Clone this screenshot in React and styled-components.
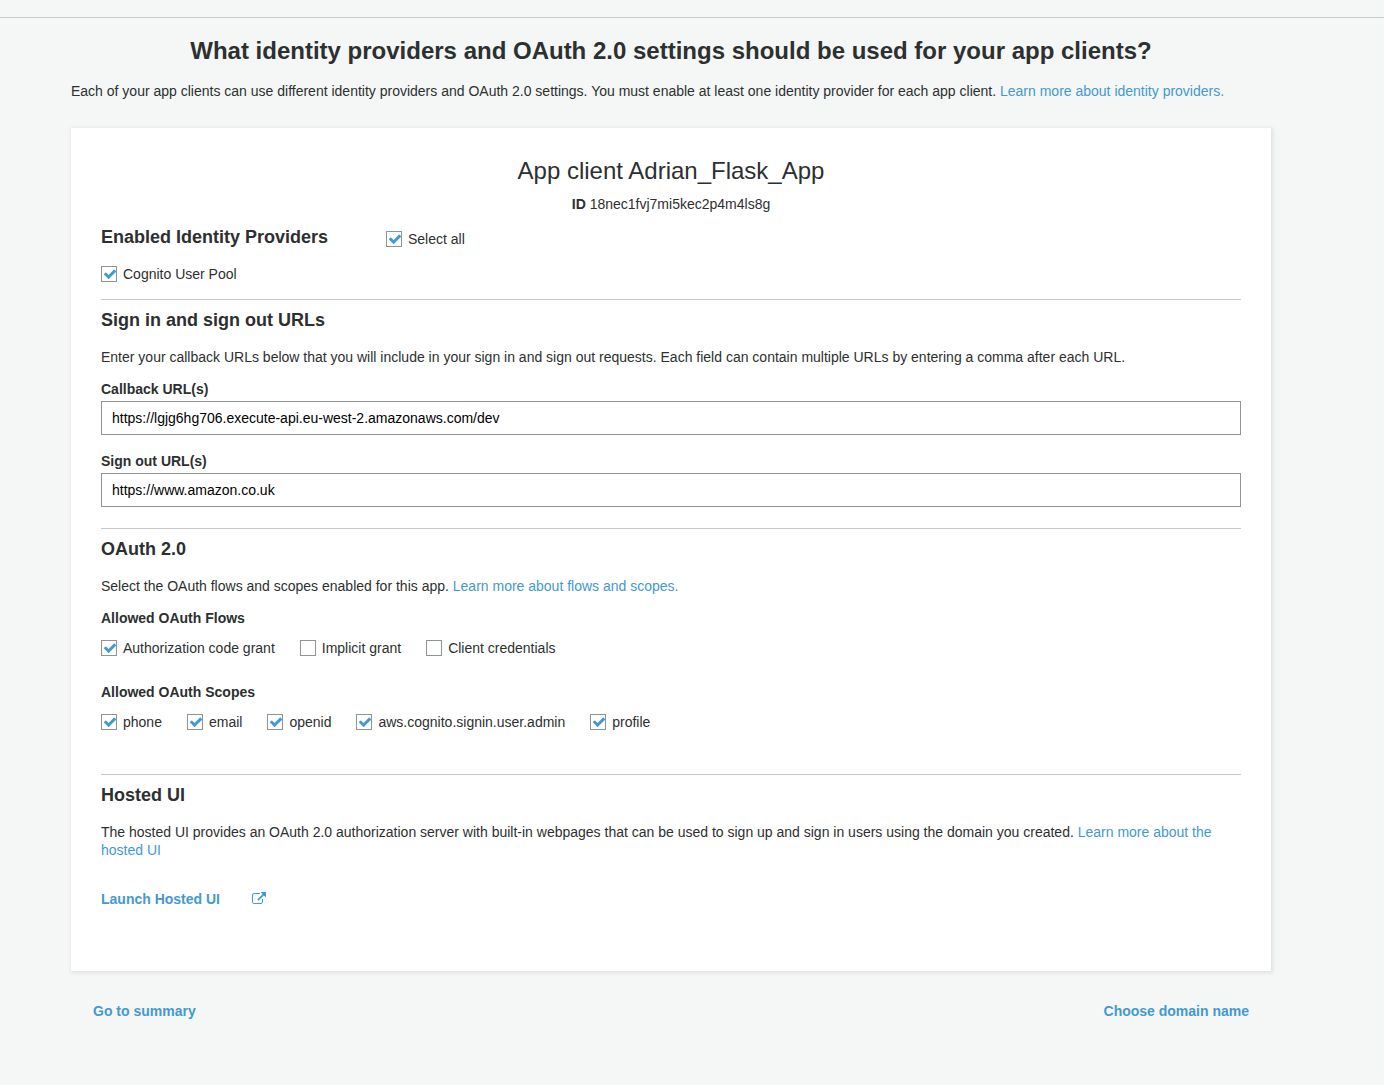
import React, { useState } from "react";
import styled, { createGlobalStyle } from "styled-components";

const GlobalStyle = createGlobalStyle`
  *, *::before, *::after { box-sizing: border-box; }
  body {
    margin: 0;
    background: #f4f7f6;
    color: #2d3030;
    font: 14px/18px "Liberation Sans", Arial, sans-serif;
  }
`;

const Page = styled.div`
  padding-top: 17px;
`;

const Main = styled.main`
  border-top: 1px solid #c6caca;
  padding: 18px 113px 56px 71px;
`;

const Content = styled.div`
  max-width: 1200px;
`;

const PageTitle = styled.h1`
  margin: 0 0 16px;
  font-size: 24px;
  line-height: 30px;
  text-align: center;
`;

const Text = styled.p`
  margin: 0 0 ${(p) => p.$gap ?? 14}px;
`;

const Link = styled.a`
  color: #4399d2;
  text-decoration: none;
  &:hover { text-decoration: underline; }
`;

const Card = styled.article`
  padding: 28px 30px 63px;
  background: #fff;
  box-shadow: 1px 1px 4px 1px rgba(0, 0, 0, 0.09);
`;

const ClientHeader = styled.header`
  margin-bottom: 12px;
  text-align: center;
`;

const ClientTitle = styled.h2`
  margin: 0 0 9px;
  font-size: 24px;
  font-weight: 400;
  line-height: 30px;
`;

const Section = styled.section`
  padding: ${(p) => (p.$first ? 0 : 8)}px 0 ${(p) => p.$bottom}px;
  border-top: ${(p) => (p.$first ? 0 : 1)}px solid #c6caca;
`;

const SectionTitle = styled.h3`
  margin: 0 0 16px;
  font-size: 18px;
  line-height: 24px;
`;

const ProviderHeader = styled.div`
  display: grid;
  grid-template-columns: 1fr 3fr;
  align-items: center;
  ${SectionTitle} { margin-bottom: 0; }
`;

const Field = styled.div`
  display: flex;
  flex-direction: column;
  gap: 3px;
  & + & { margin-top: 17px; }
`;

const FieldLabel = styled.label`
  font-weight: 700;
`;

const TextInput = styled.input`
  width: 100%;
  height: 34px;
  padding: 0 10px;
  border: 1px solid #8f9494;
  border-radius: 0;
  background: #fff;
  color: #000;
  font: inherit;
`;

const OptionGroup = styled.fieldset`
  min-width: 0;
  margin: 0;
  padding: 0;
  border: 0;
  & + & { margin-top: 26px; }
`;

const GroupTitle = styled.legend`
  margin-bottom: 12px;
  padding: 0;
  font-weight: 700;
`;

const Options = styled.div`
  display: flex;
  flex-wrap: wrap;
  gap: 12px 25px;
  padding-top: ${(p) => p.$top ?? 0}px;
`;

const CheckLabel = styled.label`
  display: inline-flex;
  align-items: center;
  gap: 6px;
`;

const CheckBox = styled.span`
  display: grid;
  place-items: center end;
  width: 16px;
  height: 16px;
  > * { grid-area: 1 / 1; }
  > svg {
    width: 14px;
    height: 14px;
    fill: #4399d2;
    pointer-events: none;
    visibility: hidden;
  }
  > input:checked + svg { visibility: visible; }
`;

const CheckInput = styled.input`
  appearance: none;
  width: 16px;
  height: 16px;
  margin: 0;
  border: 1px solid #8f9494;
  background: #fff;
`;

const LaunchLink = styled(Link)`
  display: inline-flex;
  align-items: center;
  gap: 32px;
  font-weight: 700;
  svg {
    width: 14px;
    height: 14px;
    fill: currentColor;
  }
`;

const Footer = styled.nav`
  display: flex;
  justify-content: space-between;
  padding: 31px 22px 0;
  font-weight: 700;
`;

function Check({ label, checked, onChange }) {
  return (
    <CheckLabel>
      <CheckBox>
        <CheckInput type="checkbox" checked={checked} onChange={(e) => onChange(e.target.checked)} />
        <svg viewBox="0 0 1792 1792" aria-hidden="true">
          <path d="M1671 566q0 40-28 68l-724 724-136 136q-28 28-68 28t-68-28l-136-136-362-362q-28-28-28-68t28-68l136-136q28-28 68-28t68 28l294 295 656-657q28-28 68-28t68 28l136 136q28 28 28 68z" />
        </svg>
      </CheckBox>
      {label}
    </CheckLabel>
  );
}

function CheckGroup({ title, initial }) {
  const [values, setValues] = useState(initial);
  return (
    <OptionGroup>
      <GroupTitle>{title}</GroupTitle>
      <Options>
        {Object.entries(values).map(([name, on]) => (
          <Check
            key={name}
            label={name}
            checked={on}
            onChange={(next) => setValues({ ...values, [name]: next })}
          />
        ))}
      </Options>
    </OptionGroup>
  );
}

const flows = {
  "Authorization code grant": true,
  "Implicit grant": false,
  "Client credentials": false,
};

const scopes = {
  phone: true,
  email: true,
  openid: true,
  "aws.cognito.signin.user.admin": true,
  profile: true,
};

export default function App() {
  const [userPool, setUserPool] = useState(true);
  return (
    <Page>
      <GlobalStyle />
      <Main>
        <Content>
          <PageTitle>
            What identity providers and OAuth 2.0 settings should be used for your app clients?
          </PageTitle>
          <Text $gap={28}>
            Each of your app clients can use different identity providers and OAuth 2.0 settings. You
            must enable at least one identity provider for each app client.{" "}
            <Link href="#providers">Learn more about identity providers.</Link>
          </Text>

          <Card>
            <ClientHeader>
              <ClientTitle>App client Adrian_Flask_App</ClientTitle>
              <Text $gap={0}>
                <strong>ID</strong> 18nec1fvj7mi5kec2p4m4ls8g
              </Text>
            </ClientHeader>

            <Section $first $bottom={16}>
              <ProviderHeader>
                <SectionTitle>Enabled Identity Providers</SectionTitle>
                <Options $top={4}>
                  <Check label="Select all" checked={userPool} onChange={setUserPool} />
                </Options>
              </ProviderHeader>
              <Options $top={16}>
                <Check label="Cognito User Pool" checked={userPool} onChange={setUserPool} />
              </Options>
            </Section>

            <Section $bottom={21}>
              <SectionTitle>Sign in and sign out URLs</SectionTitle>
              <Text>
                Enter your callback URLs below that you will include in your sign in and sign out
                requests. Each field can contain multiple URLs by entering a comma after each URL.
              </Text>
              <Field>
                <FieldLabel htmlFor="callback">Callback URL(s)</FieldLabel>
                <TextInput
                  id="callback"
                  type="text"
                  defaultValue="https://lgjg6hg706.execute-api.eu-west-2.amazonaws.com/dev"
                />
              </Field>
              <Field>
                <FieldLabel htmlFor="signout">Sign out URL(s)</FieldLabel>
                <TextInput id="signout" type="text" defaultValue="https://www.amazon.co.uk" />
              </Field>
            </Section>

            <Section $bottom={43}>
              <SectionTitle>OAuth 2.0</SectionTitle>
              <Text>
                Select the OAuth flows and scopes enabled for this app.{" "}
                <Link href="#flows">Learn more about flows and scopes.</Link>
              </Text>
              <CheckGroup title="Allowed OAuth Flows" initial={flows} />
              <CheckGroup title="Allowed OAuth Scopes" initial={scopes} />
            </Section>

            <Section $bottom={0}>
              <SectionTitle>Hosted UI</SectionTitle>
              <Text $gap={31}>
                The hosted UI provides an OAuth 2.0 authorization server with built-in webpages that
                can be used to sign up and sign in users using the domain you created.{" "}
                <Link href="#hosted-ui">Learn more about the hosted UI</Link>
              </Text>
              <LaunchLink href="#launch">
                Launch Hosted UI
                <svg viewBox="0 0 1792 1792" aria-hidden="true">
                  <path d="M1408 928v320q0 119-84.500 203.500T1120 1536H288q-119 0-203.500-84.500T0 1248V416q0-119 84.500-203.500T288 128h704q14 0 23 9t9 23v64q0 14-9 23t-23 9H288q-66 0-113 47t-47 113v832q0 66 47 113t113 47h832q66 0 113-47t47-113V928q0-14 9-23t23-9h64q14 0 23 9t9 23zm384-864v512q0 26-19 45t-45 19-45-19l-176-176-652 652q-10 10-23 10t-23-10L695 983q-10-10-10-23t10-23l652-652-176-176q-19-19-19-45t19-45 45-19h512q26 0 45 19t19 45z" />
                </svg>
              </LaunchLink>
            </Section>
          </Card>

          <Footer>
            <Link href="#summary">Go to summary</Link>
            <Link href="#domain">Choose domain name</Link>
          </Footer>
        </Content>
      </Main>
    </Page>
  );
}
